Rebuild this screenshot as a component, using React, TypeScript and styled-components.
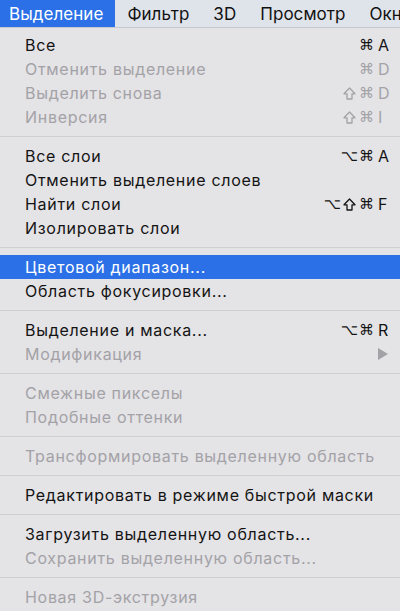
import * as React from 'react';
import styled, { createGlobalStyle } from 'styled-components';

const GlobalStyle = createGlobalStyle`
    html, body {
        margin: 0;
        padding: 0;
        height: 100%;
        overflow: hidden;
        background: #e4e3e6;
    }
    body {
        font-family: Inter, "Liberation Sans", Arial, sans-serif;
        -webkit-font-smoothing: antialiased;
    }
`;

const Screen = styled.div`
    width: 400px;
    height: 611px;
    display: flex;
    flex-direction: column;
    overflow: hidden;
`;

const MenuBar = styled.div`
    height: 27px;
    flex: none;
    display: flex;
    align-items: stretch;
    background: #dfe3ea;
    border-bottom: 1px solid #c9c9cd;
    white-space: nowrap;
`;

const BarItem = styled.div<{ $active?: boolean; $first?: boolean }>`
    display: flex;
    align-items: center;
    padding: 0 12px 0 ${(p) => (p.$first ? '9px' : '12px')};
    font-size: 17px;
    letter-spacing: 0.05px;
    color: ${(p) => (p.$active ? '#ffffff' : '#111111')};
    background: ${(p) => (p.$active ? '#2b70e6' : 'transparent')};
`;

const Menu = styled.div`
    flex: 1;
    padding-top: 5px;
    background: #e4e3e6;
    display: flex;
    flex-direction: column;
`;

const Row = styled.div<{ $disabled?: boolean; $selected?: boolean }>`
    height: 24px;
    flex: none;
    display: flex;
    align-items: center;
    padding: 0 10px 0 25px;
    font-size: 16px;
    letter-spacing: 0.7px;
    white-space: nowrap;
    color: ${(p) => (p.$selected ? '#ffffff' : p.$disabled ? '#a3a2a6' : '#141414')};
    background: ${(p) => (p.$selected ? '#2b70e6' : 'transparent')};
`;

const Label = styled.span`
    flex: 1;
`;

const Shortcut = styled.span`
    display: flex;
    align-items: center;
`;

const Mod = styled.span`
    width: 17px;
    display: flex;
    justify-content: center;
    align-items: center;
    font-family: "DejaVu Sans", sans-serif;
    font-size: 15px;
    letter-spacing: 0;
`;

const Key = styled.span`
    width: 12px;
    padding-left: 3px;
    font-size: 16px;
    letter-spacing: 0;
    text-align: left;
`;

const Arrow = styled.span`
    width: 12px;
    display: flex;
    justify-content: flex-end;
    padding-right: 2px;
`;

const Separator = styled.div`
    flex: none;
    height: 1px;
    margin: 7px 0;
    background: #cfced2;
`;

const ShiftIcon: React.FC = () => (
    <svg width="13" height="13" viewBox="0 0 13 13" fill="none">
        <path
            d="M6.5 1 L12 6.8 H9 V12 H4 V6.8 H1 Z"
            stroke="currentColor"
            strokeWidth="1.3"
            strokeLinejoin="round"
        />
    </svg>
);

const SubmenuIcon: React.FC = () => (
    <svg width="10" height="12" viewBox="0 0 10 12">
        <path d="M0 0 L10 6 L0 12 Z" fill="currentColor" />
    </svg>
);

type Item = {
    label: string;
    mods?: string[];
    keyChar?: string;
    disabled?: boolean;
    selected?: boolean;
    submenu?: boolean;
};

const groups: Item[][] = [
    [
        { label: 'Все', mods: ['cmd'], keyChar: 'A' },
        { label: 'Отменить выделение', mods: ['cmd'], keyChar: 'D', disabled: true },
        { label: 'Выделить снова', mods: ['shift', 'cmd'], keyChar: 'D', disabled: true },
        { label: 'Инверсия', mods: ['shift', 'cmd'], keyChar: 'I', disabled: true },
    ],
    [
        { label: 'Все слои', mods: ['opt', 'cmd'], keyChar: 'A' },
        { label: 'Отменить выделение слоев' },
        { label: 'Найти слои', mods: ['opt', 'shift', 'cmd'], keyChar: 'F' },
        { label: 'Изолировать слои' },
    ],
    [
        { label: 'Цветовой диапазон...', selected: true },
        { label: 'Область фокусировки...' },
    ],
    [
        { label: 'Выделение и маска...', mods: ['opt', 'cmd'], keyChar: 'R' },
        { label: 'Модификация', disabled: true, submenu: true },
    ],
    [
        { label: 'Смежные пикселы', disabled: true },
        { label: 'Подобные оттенки', disabled: true },
    ],
    [{ label: 'Трансформировать выделенную область', disabled: true }],
    [{ label: 'Редактировать в режиме быстрой маски' }],
    [
        { label: 'Загрузить выделенную область...' },
        { label: 'Сохранить выделенную область...', disabled: true },
    ],
    [{ label: 'Новая 3D-экструзия', disabled: true }],
];

const barItems = ['Выделение', 'Фильтр', '3D', 'Просмотр', 'Окно'];

const ModGlyph: React.FC<{ name: string }> = ({ name }) => {
    if (name === 'shift') return <Mod><ShiftIcon /></Mod>;
    return <Mod>{name === 'cmd' ? '⌘' : '⌥'}</Mod>;
};

const MenuRow: React.FC<{ item: Item }> = ({ item }) => (
    <Row $disabled={item.disabled} $selected={item.selected}>
        <Label>{item.label}</Label>
        {item.keyChar && (
            <Shortcut>
                {item.mods?.map((m) => <ModGlyph key={m} name={m} />)}
                <Key>{item.keyChar}</Key>
            </Shortcut>
        )}
        {item.submenu && (
            <Arrow>
                <SubmenuIcon />
            </Arrow>
        )}
    </Row>
);

const App: React.FC = () => (
    <Screen>
        <GlobalStyle />
        <MenuBar>
            {barItems.map((name, i) => (
                <BarItem key={name} $active={i === 0} $first={i === 0}>
                    {name}
                </BarItem>
            ))}
        </MenuBar>
        <Menu>
            {groups.map((group, gi) => (
                <React.Fragment key={gi}>
                    {gi > 0 && <Separator />}
                    {group.map((item) => (
                        <MenuRow key={item.label} item={item} />
                    ))}
                </React.Fragment>
            ))}
        </Menu>
    </Screen>
);

export default App;
